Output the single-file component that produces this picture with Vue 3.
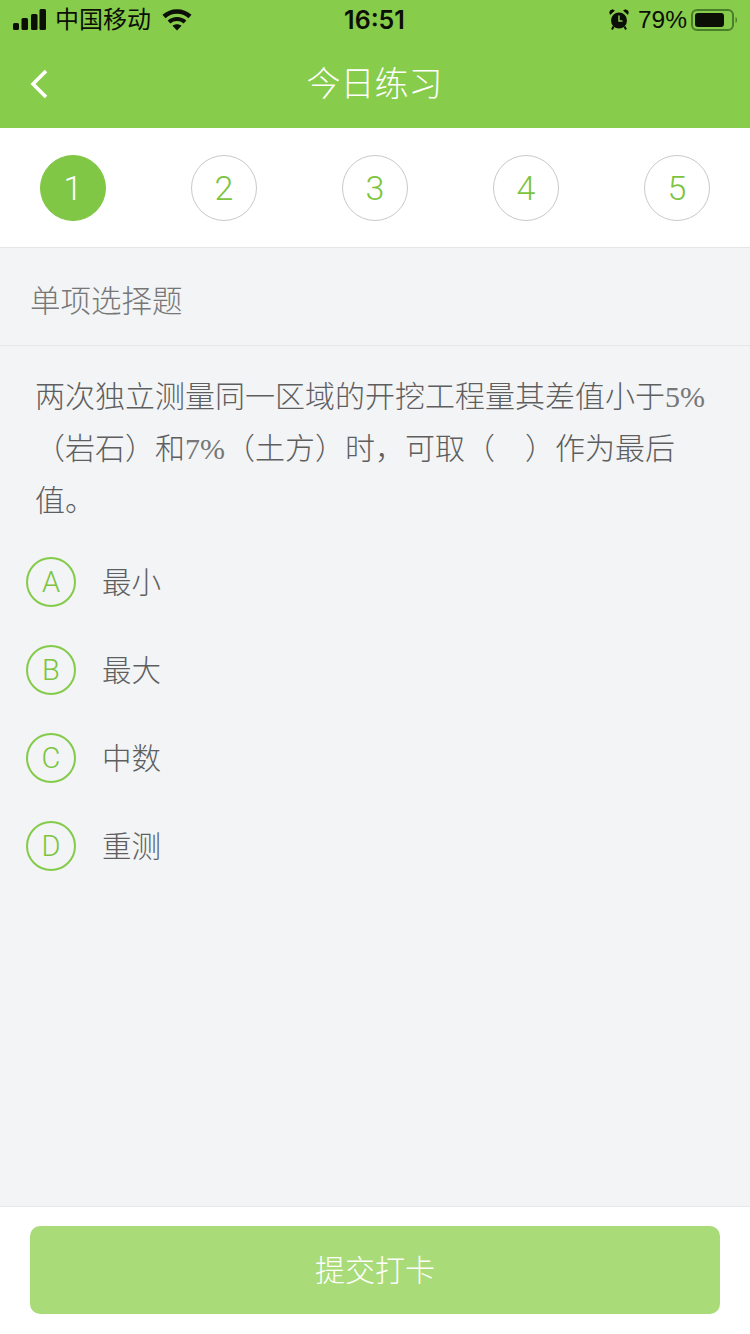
<script setup>
const steps = [1, 2, 3, 4, 5]
const options = [
  { key: 'A', text: '最小' },
  { key: 'B', text: '最大' },
  { key: 'C', text: '中数' },
  { key: 'D', text: '重测' }
]
</script>

<template>
  <div class="page">
    <header class="top">
      <div class="status">
        <div class="status-left">
          <svg class="signal" width="34" height="22" viewBox="0 0 34 22">
            <rect x="0" y="14" width="6" height="7" rx="1.500" fill="#0b0f06" />
            <rect x="8.500" y="9" width="6.500" height="12" rx="1.500" fill="#0b0f06" />
            <rect x="18" y="5" width="6.500" height="16" rx="1.500" fill="#0b0f06" />
            <rect x="26.500" y="0" width="6.500" height="21" rx="1.500" fill="#0b0f06" />
          </svg>
          <span class="carrier">中国移动</span>
          <svg class="wifi" width="30" height="22" viewBox="0 0 30 22">
            <path d="M2 7.500C9.500 .8 20.500 .8 28 7.500" fill="none" stroke="#0b0f06" stroke-width="4.600" />
            <path d="M7 13C11.500 9 18.500 9 23 13" fill="none" stroke="#0b0f06" stroke-width="4.200" />
            <path d="M10.500 16.800C13 14.800 17 14.800 19.500 16.800L15 21.500Z" fill="#0b0f06" />
          </svg>
        </div>
        <span class="time">16:51</span>
        <div class="status-right">
          <svg class="alarm" width="20" height="22" viewBox="0 0 20 22">
            <circle cx="10" cy="11.500" r="8" fill="#0b0f06" />
            <path d="M10 6.500v5.500h3.500" fill="none" stroke="#86cd4c" stroke-width="1.500" />
            <path d="M1 6 6 1.500 3.500 .3 1 1.500 .3 3.500ZM19 6 14 1.500 16.500 .3 19 1.500 19.700 3.500Z" fill="#0b0f06" />
            <path d="M4.500 17.500 3 20.500M15.500 17.500 17 20.500" stroke="#0b0f06" stroke-width="2" />
          </svg>
          <span class="percent">79%</span>
          <svg class="battery" width="48" height="22" viewBox="0 0 48 22">
            <rect x="2" y="1" width="41" height="20" rx="5" fill="none" stroke="#4a7f2a" stroke-width="2" />
            <rect x="5" y="4" width="29" height="14" rx="3" fill="#0b0f06" />
            <path d="M45.500 8c1.200.5 1.500 1.500 1.500 3s-.3 2.500-1.500 3Z" fill="#4a7f2a" />
          </svg>
        </div>
      </div>
      <div class="nav">
        <svg class="back" width="20" height="32" viewBox="0 0 20 32">
          <path d="M17 3 4 16l13 13" fill="none" stroke="#fff" stroke-width="3.600" />
        </svg>
        <h1 class="title">今日练习</h1>
      </div>
    </header>

    <section class="steps">
      <div v-for="n in steps" :key="n" class="step" :class="{ active: n === 1 }">{{ n }}</div>
    </section>

    <main class="main">
      <div class="type">单项选择题</div>
      <p class="question">两次独立测量同一区域的开挖工程量其差值小于<span class="num">5%</span>（岩石）和<span class="num">7%</span>（土方）时，可取（　）作为最后值。</p>
      <ul class="options">
        <li v-for="o in options" :key="o.key" class="option">
          <span class="letter">{{ o.key }}</span>
          <span class="text">{{ o.text }}</span>
        </li>
      </ul>
    </main>

    <footer class="footer">
      <button class="submit" type="button">提交打卡</button>
    </footer>
  </div>
</template>

<style scoped>
.page {
  width: 750px;
  height: 1334px;
  display: flex;
  flex-direction: column;
  background: #f2f4f6;
  font-family: "Noto Sans CJK SC", sans-serif;
  font-weight: 300;
  overflow: hidden;
}
.top {
  background: #87cc4b;
  height: 128px;
}
.status {
  height: 40px;
  padding: 0 12px 0 13px;
  display: grid;
  grid-template-columns: 1fr auto 1fr;
  align-items: center;
  color: #0b0f06;
}
.status-left {
  display: flex;
  align-items: center;
}
.carrier {
  margin-left: 8px;
  padding-bottom: 4px;
  font-size: 24px;
  font-weight: 400;
  line-height: 36px;
}
.wifi {
  margin-left: 11px;
}
.time {
  padding-right: 2px;
  font-family: Inter, "Liberation Sans", sans-serif;
  font-size: 25px;
  line-height: 40px;
  font-weight: 600;
}
.status-right {
  display: flex;
  align-items: center;
  justify-content: flex-end;
}
.percent {
  margin-left: 9px;
  font-family: "Liberation Sans", sans-serif;
  font-size: 24.500px;
  font-weight: 400;
  line-height: 40px;
}
.battery {
  margin-left: 3px;
}
.nav {
  height: 88px;
  box-sizing: border-box;
  padding-bottom: 4px;
  display: flex;
  align-items: center;
  justify-content: center;
  position: relative;
}
.back {
  position: absolute;
  left: 29px;
  top: 28px;
}
.title {
  margin: 0;
  padding-right: 1px;
  color: #fff;
  font-size: 34px;
  font-weight: 300;
  line-height: 84px;
}
.steps {
  height: 120px;
  box-sizing: border-box;
  padding: 27px 40px 0;
  display: flex;
  justify-content: space-between;
  align-items: flex-start;
  background: #fff;
  border-bottom: 1px solid #e6e6e6;
}
.step {
  width: 66px;
  height: 66px;
  box-sizing: border-box;
  border: 1px solid #c9c9c9;
  border-radius: 50%;
  display: flex;
  align-items: center;
  justify-content: center;
  color: #7cc43e;
  font-family: Roboto, "Liberation Sans", sans-serif;
  font-weight: 300;
  font-size: 34px;
}
.step.active {
  background: #80c745;
  border-color: #80c745;
  color: #fff;
}
.main {
  flex: 1;
}
.type {
  height: 98px;
  box-sizing: border-box;
  padding-left: 30px;
  border-bottom: 1px solid #e6e8ea;
  color: #777;
  font-size: 30.500px;
  line-height: 102px;
}
.question {
  margin: 0;
  padding: 25px 30px 0 35px;
  color: #5e5e5e;
  font-family: "Liberation Serif", "Noto Sans CJK SC", serif;
  font-size: 30px;
  line-height: 52px;
}
.num {
  font-weight: 400;
  color: #777;
}
.options {
  margin: 30px 0 0;
  padding: 0 0 0 26px;
  list-style: none;
  display: flex;
  flex-direction: column;
  gap: 38px;
}
.option {
  display: flex;
  align-items: center;
  height: 50px;
}
.letter {
  width: 50px;
  height: 50px;
  box-sizing: border-box;
  border: 2px solid #85cb4a;
  border-radius: 50%;
  display: flex;
  align-items: center;
  justify-content: center;
  color: #7cc43e;
  font-family: Roboto, "Liberation Sans", sans-serif;
  font-weight: 300;
  font-size: 29px;
}
.text {
  margin-left: 26px;
  padding-bottom: 4px;
  color: #5e5e5e;
  font-size: 29.500px;
}
.footer {
  height: 128px;
  box-sizing: border-box;
  padding: 19px 30px 0;
  background: #fff;
  border-top: 1px solid #e6e8ea;
}
.submit {
  display: block;
  width: 100%;
  height: 88px;
  border: 0;
  border-radius: 10px;
  padding: 0 0 4px;
  background: #a9dc78;
  color: #fff;
  font-family: inherit;
  font-weight: 300;
  font-size: 30px;
}
</style>

<style>
html, body {
  margin: 0;
  padding: 0;
}
</style>
